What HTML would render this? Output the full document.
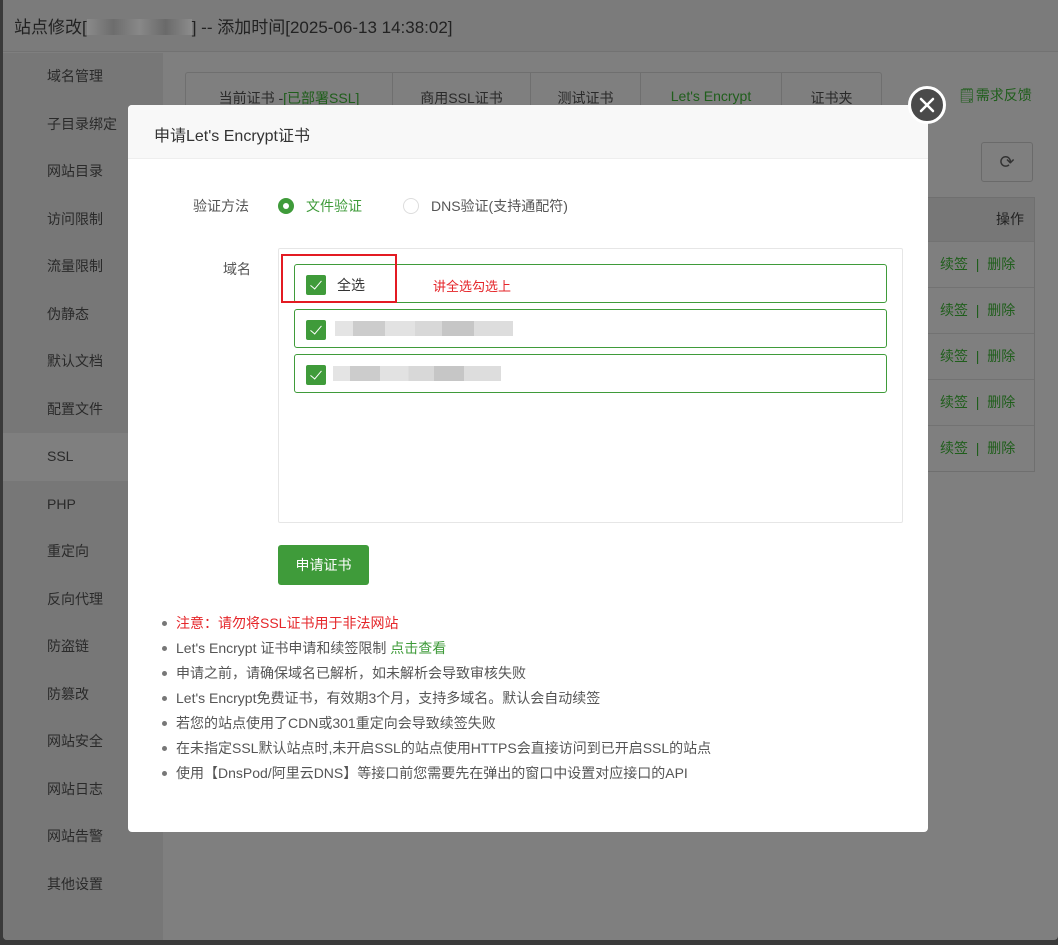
<!DOCTYPE html>
<html><head><meta charset="utf-8"><style>
*{margin:0;padding:0;box-sizing:border-box}
body{width:1058px;height:945px;overflow:hidden;background:#3a3a3a;font-family:"Liberation Sans","Noto Sans CJK SC",sans-serif;font-size:14px;position:relative}
.frame{position:absolute;left:3px;top:0;width:1055px;height:940px;background:#7f7f7f;border-radius:0 0 4px 4px;overflow:hidden}
.top{position:absolute;left:0;top:0;width:100%;height:52px;background:#7b7b7b;border-bottom:1px solid #727272}
.top span{position:absolute;left:11px;top:13px;font-size:17px;color:#222}
.blur{display:inline-block;width:105px;height:16px;background:linear-gradient(90deg,#8a8a8a,#6d6d6d,#888,#6a6a6a,#8c8c8c);vertical-align:-2px}
.side{position:absolute;left:0;top:53px;width:160px;height:887px;background:#777}
.side div{height:47.5px;line-height:47.5px;padding-left:44px;color:#2a2a2a;font-size:14px}
.side div.act{background:#7f7f7f}
.tabs{position:absolute;left:182px;top:72px;width:697px;height:50px;border:1px solid #6f6f6f;border-radius:3px;display:flex;color:#2a2a2a}
.tabs div{border-right:1px solid #6f6f6f;padding-top:15px;text-align:center;font-size:14px}
.g{color:#1f5e1b}
.fb{position:absolute;left:955px;top:85px;color:#1f5e1b;font-size:14px}
.tbl{position:absolute;left:925px;top:197px;width:107px;border:1px solid #6f6f6f;border-left:0}
.tbl .h{height:43px;background:#777;line-height:42px;text-align:right;padding-right:10px;color:#222}
.tbl .r{height:46px;border-top:1px solid #727272;line-height:44px;color:#1f5e1b;padding-left:12px}
.ref{position:absolute;left:978px;top:142px;width:52px;height:40px;border:1px solid #6a6a6a;border-radius:3px;text-align:center;line-height:38px;color:#333;font-size:18px}
.modal{position:absolute;left:128px;top:105px;width:800px;height:727px;background:#fff;border-radius:4px}
.mh{height:54px;background:#f8f8f8;border-bottom:1px solid #eee;border-radius:4px 4px 0 0;padding:17px 0 0 26px;font-size:16px;color:#333}
.close{position:absolute;left:908px;top:86px;width:38px;height:38px;border-radius:50%;background:#4a4a4a;border:3px solid #fff}
.lab{position:absolute;color:#555;font-size:14px}
.radio{position:absolute;width:16px;height:16px;border-radius:50%}
.box{position:absolute;left:278px;top:248px;width:625px;height:275px;border:1px solid #e6e6e6;border-radius:2px}
.row{position:absolute;left:294px;width:593px;height:39px;border:1px solid #3f9b3a;border-radius:3px}
.cb{position:absolute;left:11px;top:10px;width:20px;height:20px;background:#3f9b3a;border-radius:2px}
.cb:after{content:"";position:absolute;left:7px;top:3px;width:5px;height:10px;border:solid #fff;border-width:0 1px 1px 0;transform:rotate(40deg)}
.pix{position:absolute;top:11px;height:15px;background:linear-gradient(90deg,#e4e4e4 0 10%,#ccc 10% 28%,#e2e2e2 28% 45%,#d8d8d8 45% 60%,#c6c6c6 60% 78%,#ddd 78%)}
.btn{position:absolute;left:278px;top:545px;width:91px;height:40px;background:#3f9b3a;border-radius:3px;color:#fff;text-align:center;line-height:40px;font-size:14px}
ul{position:absolute;left:176px;top:612px;list-style:none;color:#555;font-size:14px}
ul li{height:25px;line-height:22px;position:relative}
ul li:before{content:"";position:absolute;left:-14px;top:9px;width:5px;height:5px;border-radius:50%;background:#777}
</style></head><body>
<div class="frame">
<div class="top"><span>站点修改[<i class="blur"></i>] -- 添加时间[2025-06-13 14:38:02]</span></div>
<div class="side">
<div>域名管理</div><div>子目录绑定</div><div>网站目录</div><div>访问限制</div><div>流量限制</div><div>伪静态</div><div>默认文档</div><div>配置文件</div><div class="act">SSL</div><div>PHP</div><div>重定向</div><div>反向代理</div><div>防盗链</div><div>防篡改</div><div>网站安全</div><div>网站日志</div><div>网站告警</div><div>其他设置</div>
</div>
<div class="tabs"><div style="width:207px">当前证书 -<span class="g">[已部署SSL]</span></div><div style="width:138px">商用SSL证书</div><div style="width:110px">测试证书</div><div style="width:141px" class="g">Let's Encrypt</div><div style="width:99px;border:0">证书夹</div></div>
<div class="fb">🗒需求反馈</div>
<div class="ref">⟳</div>
<div class="tbl"><div class="h">操作</div><div class="r">续签 &nbsp;| &nbsp;删除</div><div class="r">续签 &nbsp;| &nbsp;删除</div><div class="r">续签 &nbsp;| &nbsp;删除</div><div class="r">续签 &nbsp;| &nbsp;删除</div><div class="r">续签 &nbsp;| &nbsp;删除</div></div>
</div>
<div class="modal"><div class="mh">申请Let's Encrypt证书</div></div>
<div class="close"><svg width="32" height="32" viewBox="0 0 32 32" style="position:absolute;left:0;top:0"><path d="M10 10L22 22M22 10L10 22" stroke="#fff" stroke-width="2.5" stroke-linecap="round"/></svg></div>
<div class="lab" style="left:193px;top:196px">验证方法</div>
<div class="radio" style="left:278px;top:198px;background:#3f9b3a"><div style="position:absolute;left:5px;top:5px;width:6px;height:6px;border-radius:50%;background:#fff"></div></div>
<div class="lab" style="left:306px;top:196px;color:#3f9b3a">文件验证</div>
<div class="radio" style="left:403px;top:198px;border:1px solid #ddd"></div>
<div class="lab" style="left:431px;top:196px">DNS验证(支持通配符)</div>
<div class="lab" style="left:223px;top:259px">域名</div>
<div class="box"></div>
<div class="row" style="top:264px"><div class="cb"></div><span style="position:absolute;left:42px;top:10px;color:#333">全选</span><span style="position:absolute;left:138px;top:11px;color:#e5262a;font-size:13px">讲全选勾选上</span></div>
<div style="position:absolute;left:281px;top:254px;width:116px;height:49px;border:2px solid #e31b23"></div>
<div class="row" style="top:309px"><div class="cb"></div><div class="pix" style="left:40px;width:178px"></div></div>
<div class="row" style="top:354px"><div class="cb"></div><div class="pix" style="left:38px;width:168px"></div></div>
<div class="btn">申请证书</div>
<ul>
<li style="color:#e5262a">注意：请勿将SSL证书用于非法网站</li>
<li>Let's Encrypt 证书申请和续签限制 <span style="color:#3f9b3a">点击查看</span></li>
<li>申请之前，请确保域名已解析，如未解析会导致审核失败</li>
<li>Let's Encrypt免费证书，有效期3个月，支持多域名。默认会自动续签</li>
<li>若您的站点使用了CDN或301重定向会导致续签失败</li>
<li>在未指定SSL默认站点时,未开启SSL的站点使用HTTPS会直接访问到已开启SSL的站点</li>
<li>使用【DnsPod/阿里云DNS】等接口前您需要先在弹出的窗口中设置对应接口的API</li>
</ul>
</body></html>
